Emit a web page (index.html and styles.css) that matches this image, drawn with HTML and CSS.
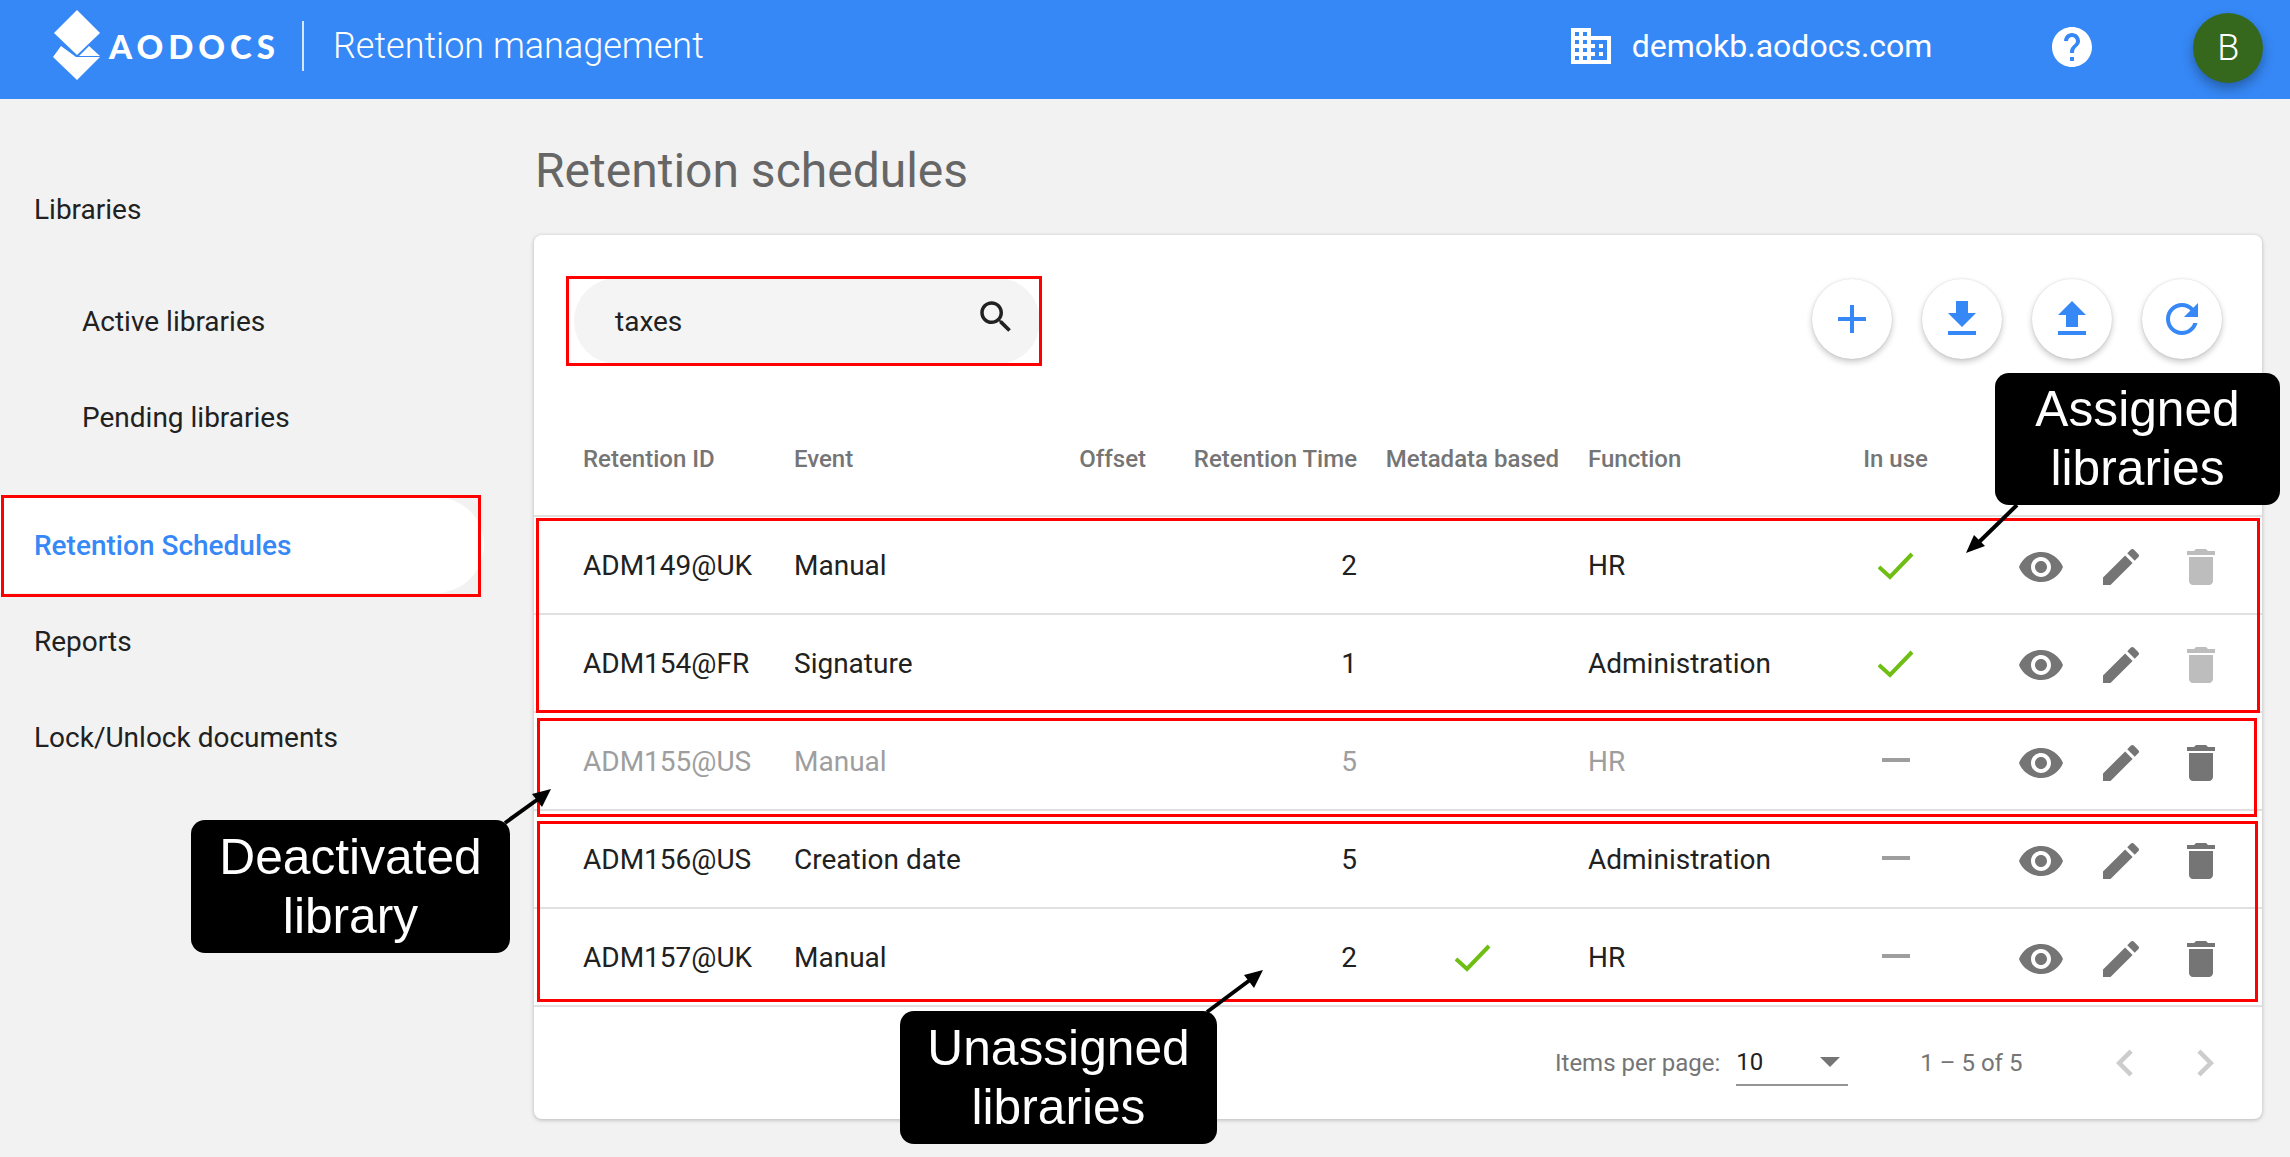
FILE: index.html
```html
<!DOCTYPE html>
<html lang="en">
<head>
<meta charset="utf-8">
<title>Retention management</title>
<link rel="stylesheet" href="styles.css">
</head>
<body>
<div class="page">
  <header class="topbar">
    <div class="brand">
      <svg class="logo-mark" viewBox="0 0 48 71" aria-hidden="true"><path d="M24 0 47 23 24 45 1 23Z"/><path d="M0 47 8 36 23 47ZM26 46 36 36 47 46ZM0 47H47L24 70Z"/></svg>
      <span class="wordmark">AODOCS</span>
      <span class="brand-divider"></span>
      <span class="app-title">Retention management</span>
    </div>
    <div class="tenant">
      <svg class="icon-48" viewBox="0 0 24 24" aria-hidden="true"><path d="M12 7V3H2v18h20V7H12zM6 19H4v-2h2v2zm0-4H4v-2h2v2zm0-4H4V9h2v2zm0-4H4V5h2v2zm4 12H8v-2h2v2zm0-4H8v-2h2v2zm0-4H8V9h2v2zm0-4H8V5h2v2zm10 12h-8v-2h2v-2h-2v-2h2v-2h-2V9h8v10zm-2-8h-2v2h2v-2zm0 4h-2v2h2v-2z"/></svg>
      <span class="tenant-name">demokb.aodocs.com</span>
    </div>
    <svg class="icon-48 help" viewBox="0 0 24 24" aria-hidden="true"><path d="M12 2C6.48 2 2 6.48 2 12s4.48 10 10 10 10-4.48 10-10S17.52 2 12 2zm1 17h-2v-2h2v2zm2.07-7.75l-.9.92C13.45 12.9 13 13.5 13 15h-2v-.5c0-1.1.45-2.1 1.17-2.83l1.24-1.26c.37-.36.59-.86.59-1.41 0-1.1-.9-2-2-2s-2 .9-2 2H8c0-2.21 1.79-4 4-4s4 1.79 4 4c0 .88-.36 1.68-.93 2.25z"/></svg>
    <div class="avatar">B</div>
  </header>

  <div class="content">
    <nav class="sidebar">
      <a class="nav-item">Libraries</a>
      <a class="nav-item nav-sub nav-sub-first">Active libraries</a>
      <a class="nav-item nav-sub">Pending libraries</a>
      <a class="nav-item nav-active">Retention Schedules</a>
      <a class="nav-item">Reports</a>
      <a class="nav-item">Lock/Unlock documents</a>
    </nav>

    <main class="main">
      <h1 class="page-title">Retention schedules</h1>
      <section class="card">
        <div class="toolbar">
          <div class="search">
            <span class="search-text">taxes</span>
            <svg class="search-icon" viewBox="0 0 24 24" aria-hidden="true"><path d="M15.5 14h-.79l-.28-.27C15.41 12.59 16 11.11 16 9.5 16 5.91 13.09 3 9.5 3S3 5.91 3 9.5 5.91 16 9.5 16c1.61 0 3.09-.59 4.23-1.57l.27.28v.79l5 4.99L20.49 19l-4.99-5zm-6 0C7.01 14 5 11.99 5 9.5S7.01 5 9.5 5 14 7.01 14 9.5 11.99 14 9.5 14z"/></svg>
          </div>
          <div class="fabs">
            <button class="fab"><svg class="icon-48" viewBox="0 0 24 24"><path d="M19 13h-6v6h-2v-6H5v-2h6V5h2v6h6v2z"/></svg></button>
            <button class="fab"><svg class="icon-48" viewBox="0 0 24 24"><path d="M19 9h-4V3H9v6H5l7 7 7-7zM5 18v2h14v-2H5z"/></svg></button>
            <button class="fab"><svg class="icon-48" viewBox="0 0 24 24"><path d="M9 16h6v-6h4l-7-7-7 7h4zm-4 2h14v2H5z"/></svg></button>
            <button class="fab"><svg class="icon-48" viewBox="0 0 24 24"><path d="M17.65 6.35C16.2 4.9 14.21 4 12 4c-4.42 0-7.99 3.58-7.99 8s3.57 8 7.99 8c3.73 0 6.84-2.55 7.73-6h-2.08c-.82 2.33-3.04 4-5.65 4-3.31 0-6-2.69-6-6s2.69-6 6-6c1.66 0 3.14.69 4.22 1.78L13 11h7V4l-2.35 2.35z"/></svg></button>
          </div>
        </div>

        <div class="row row-head">
          <span>Retention ID</span><span>Event</span><span class="right">Offset</span><span class="right">Retention Time</span><span class="center">Metadata based</span><span>Function</span><span class="center">In use</span><span></span>
        </div>

        <div class="row">
          <span>ADM149@UK</span><span>Manual</span><span></span><span class="right">2</span><span></span><span>HR</span>
          <span class="center"><svg class="check" viewBox="0 0 36 28"><path d="M1 15 12 25 34 2"/></svg></span>
          <span class="actions">
            <svg class="icon-48" viewBox="0 0 24 24"><path d="M12 4.5C7 4.5 2.73 7.61 1 12c1.73 4.39 6 7.5 11 7.5s9.27-3.11 11-7.5c-1.73-4.39-6-7.5-11-7.5zM12 17c-2.76 0-5-2.24-5-5s2.24-5 5-5 5 2.24 5 5-2.24 5-5 5zm0-8c-1.66 0-3 1.34-3 3s1.34 3 3 3 3-1.34 3-3-1.34-3-3-3z"/></svg>
            <svg class="icon-48" viewBox="0 0 24 24"><path d="M3 17.25V21h3.75L17.81 9.94l-3.75-3.75L3 17.25zM20.71 7.04c.39-.39.39-1.02 0-1.41l-2.34-2.34c-.39-.39-1.02-.39-1.41 0l-1.83 1.83 3.75 3.75 1.83-1.83z"/></svg>
            <svg class="icon-48 muted" viewBox="0 0 24 24"><path d="M6 19c0 1.1.9 2 2 2h8c1.1 0 2-.9 2-2V7H6v12zM19 4h-3.5l-1-1h-5l-1 1H5v2h14V4z"/></svg>
          </span>
        </div>

        <div class="row">
          <span>ADM154@FR</span><span>Signature</span><span></span><span class="right">1</span><span></span><span>Administration</span>
          <span class="center"><svg class="check" viewBox="0 0 36 28"><path d="M1 15 12 25 34 2"/></svg></span>
          <span class="actions">
            <svg class="icon-48" viewBox="0 0 24 24"><path d="M12 4.5C7 4.5 2.73 7.61 1 12c1.73 4.39 6 7.5 11 7.5s9.27-3.11 11-7.5c-1.73-4.39-6-7.5-11-7.5zM12 17c-2.76 0-5-2.24-5-5s2.24-5 5-5 5 2.24 5 5-2.24 5-5 5zm0-8c-1.66 0-3 1.34-3 3s1.34 3 3 3 3-1.34 3-3-1.34-3-3-3z"/></svg>
            <svg class="icon-48" viewBox="0 0 24 24"><path d="M3 17.25V21h3.75L17.81 9.94l-3.75-3.75L3 17.25zM20.71 7.04c.39-.39.39-1.02 0-1.41l-2.34-2.34c-.39-.39-1.02-.39-1.41 0l-1.83 1.83 3.75 3.75 1.83-1.83z"/></svg>
            <svg class="icon-48 muted" viewBox="0 0 24 24"><path d="M6 19c0 1.1.9 2 2 2h8c1.1 0 2-.9 2-2V7H6v12zM19 4h-3.5l-1-1h-5l-1 1H5v2h14V4z"/></svg>
          </span>
        </div>

        <div class="row row-off">
          <span>ADM155@US</span><span>Manual</span><span></span><span class="right">5</span><span></span><span>HR</span>
          <span class="center"><span class="dash"></span></span>
          <span class="actions">
            <svg class="icon-48" viewBox="0 0 24 24"><path d="M12 4.5C7 4.5 2.73 7.61 1 12c1.73 4.39 6 7.5 11 7.5s9.27-3.11 11-7.5c-1.73-4.39-6-7.5-11-7.5zM12 17c-2.76 0-5-2.24-5-5s2.24-5 5-5 5 2.24 5 5-2.24 5-5 5zm0-8c-1.66 0-3 1.34-3 3s1.34 3 3 3 3-1.34 3-3-1.34-3-3-3z"/></svg>
            <svg class="icon-48" viewBox="0 0 24 24"><path d="M3 17.25V21h3.75L17.81 9.94l-3.75-3.75L3 17.25zM20.71 7.04c.39-.39.39-1.02 0-1.41l-2.34-2.34c-.39-.39-1.02-.39-1.41 0l-1.83 1.83 3.75 3.75 1.83-1.83z"/></svg>
            <svg class="icon-48" viewBox="0 0 24 24"><path d="M6 19c0 1.1.9 2 2 2h8c1.1 0 2-.9 2-2V7H6v12zM19 4h-3.5l-1-1h-5l-1 1H5v2h14V4z"/></svg>
          </span>
        </div>

        <div class="row">
          <span>ADM156@US</span><span>Creation date</span><span></span><span class="right">5</span><span></span><span>Administration</span>
          <span class="center"><span class="dash"></span></span>
          <span class="actions">
            <svg class="icon-48" viewBox="0 0 24 24"><path d="M12 4.5C7 4.5 2.73 7.61 1 12c1.73 4.39 6 7.5 11 7.5s9.27-3.11 11-7.5c-1.73-4.39-6-7.5-11-7.5zM12 17c-2.76 0-5-2.24-5-5s2.24-5 5-5 5 2.24 5 5-2.24 5-5 5zm0-8c-1.66 0-3 1.34-3 3s1.34 3 3 3 3-1.34 3-3-1.34-3-3-3z"/></svg>
            <svg class="icon-48" viewBox="0 0 24 24"><path d="M3 17.25V21h3.75L17.81 9.94l-3.75-3.75L3 17.25zM20.71 7.04c.39-.39.39-1.02 0-1.41l-2.34-2.34c-.39-.39-1.02-.39-1.41 0l-1.83 1.83 3.75 3.75 1.83-1.83z"/></svg>
            <svg class="icon-48" viewBox="0 0 24 24"><path d="M6 19c0 1.1.9 2 2 2h8c1.1 0 2-.9 2-2V7H6v12zM19 4h-3.5l-1-1h-5l-1 1H5v2h14V4z"/></svg>
          </span>
        </div>

        <div class="row">
          <span>ADM157@UK</span><span>Manual</span><span></span><span class="right">2</span>
          <span class="center"><svg class="check" viewBox="0 0 36 28"><path d="M1 15 12 25 34 2"/></svg></span>
          <span>HR</span>
          <span class="center"><span class="dash"></span></span>
          <span class="actions">
            <svg class="icon-48" viewBox="0 0 24 24"><path d="M12 4.5C7 4.5 2.73 7.61 1 12c1.73 4.39 6 7.5 11 7.5s9.27-3.11 11-7.5c-1.73-4.39-6-7.5-11-7.5zM12 17c-2.76 0-5-2.24-5-5s2.24-5 5-5 5 2.24 5 5-2.24 5-5 5zm0-8c-1.66 0-3 1.34-3 3s1.34 3 3 3 3-1.34 3-3-1.34-3-3-3z"/></svg>
            <svg class="icon-48" viewBox="0 0 24 24"><path d="M3 17.25V21h3.75L17.81 9.94l-3.75-3.75L3 17.25zM20.71 7.04c.39-.39.39-1.02 0-1.41l-2.34-2.34c-.39-.39-1.02-.39-1.41 0l-1.83 1.83 3.75 3.75 1.83-1.83z"/></svg>
            <svg class="icon-48" viewBox="0 0 24 24"><path d="M6 19c0 1.1.9 2 2 2h8c1.1 0 2-.9 2-2V7H6v12zM19 4h-3.5l-1-1h-5l-1 1H5v2h14V4z"/></svg>
          </span>
        </div>

        <footer class="paginator">
          <span class="per-page-label">Items per page:</span>
          <div class="per-page"><span>10</span><span class="caret"></span></div>
          <span class="range">1 – 5 of 5</span>
          <svg class="chev" viewBox="0 0 24 24"><path d="M15.41 7.41 14 6l-6 6 6 6 1.41-1.41L10.83 12z"/></svg>
          <svg class="chev" viewBox="0 0 24 24"><path d="M10 6 8.59 7.41 13.17 12l-4.58 4.59L10 18l6-6z"/></svg>
        </footer>
      </section>
    </main>
  </div>

  <div class="mark mark-nav"></div>
  <div class="mark mark-search"></div>
  <div class="mark mark-assigned"></div>
  <div class="mark mark-off"></div>
  <div class="mark mark-unassigned"></div>

  <svg class="arrows" viewBox="0 0 2290 1157" aria-hidden="true">
    <path class="arrow-line" d="M2017 505 1976 545"/><path d="M1966 553 1985 546 1974 535Z"/>
    <path class="arrow-line" d="M505 823 541 797"/><path d="M551 789 532 794 542 807Z"/>
    <path class="arrow-line" d="M1207 1012 1254 977"/><path d="M1263 970 1244 975 1254 988Z"/>
  </svg>

  <div class="callout callout-assigned">Assigned<br>libraries</div>
  <div class="callout callout-off">Deactivated<br>library</div>
  <div class="callout callout-unassigned">Unassigned<br>libraries</div>
</div>
</body>
</html>
```

FILE: styles.css
```css
* { box-sizing: border-box; }
html, body { margin: 0; padding: 0; }
body { font-family: Roboto, "Noto Sans", sans-serif; color: #212121; background: #f2f2f2; }
.page { position: relative; width: 2290px; height: 1157px; overflow: hidden; background: #f2f2f2; }

.topbar { display: flex; align-items: center; height: 99px; background: #3688f6; color: #fff; fill: #fff; padding: 0 0 7px 53px; }
.brand { display: flex; align-items: center; }
.logo-mark { width: 48px; height: 71px; fill: #fff; margin-bottom: 2px; }
.wordmark { margin-left: 8px; font-family: Lato, sans-serif; font-weight: 900; font-size: 33px; letter-spacing: 5px; }
.brand-divider { width: 2px; height: 50px; margin-left: 22px; background: rgba(255,255,255,.8); }
.app-title { margin-left: 29px; font-size: 36px; font-weight: 300; }
.tenant { display: flex; align-items: center; margin-left: 863px; }
.tenant-name { margin-left: 17px; font-size: 32px; }
.icon-48 { width: 48px; height: 48px; display: block; }
.help { margin-left: 116px; margin-top: 2px; }
.avatar { display: flex; align-items: center; justify-content: center; width: 70px; height: 70px; margin-left: 97px; margin-top: 4px; border-radius: 50%; background: #35681d; font-size: 36px; font-weight: 300; box-shadow: 0 6px 12px rgba(0,0,0,.3); }

.content { display: flex; }
.sidebar { width: 534px; flex: none; padding-top: 62px; display: flex; flex-direction: column; }
.nav-item { display: flex; align-items: center; height: 96px; padding-left: 34px; width: 484px; font-size: 28px; }
.nav-sub { padding-left: 82px; }
.nav-sub-first { margin-top: 16px; }
.nav-active { margin-top: 32px; padding-left: 34px; background: #fff; border-radius: 0 48px 48px 0; color: #3688f6; font-weight: 500; }

.main { flex: 1; }
.page-title { margin: 46px 0 0 1px; height: 90px; font-size: 48px; line-height: 52px; font-weight: 400; color: #666; }
.card { width: 1728px; height: 884px; background: #fff; border-radius: 8px; box-shadow: 0 1px 4px rgba(0,0,0,.25); }

.toolbar { display: flex; justify-content: space-between; height: 166px; padding: 43px 40px 0 40px; }
.search { display: flex; align-items: center; justify-content: space-between; width: 466px; height: 86px; padding: 0 23px 0 41px; border-radius: 43px; background: #f4f4f4; }
.search-text { font-size: 28px; }
.search-icon { width: 42px; height: 42px; fill: #212121; margin-bottom: 8px; }
.fabs { display: flex; gap: 30px; margin-top: 1px; }
.fab { display: flex; align-items: center; justify-content: center; width: 80px; height: 80px; padding: 0; border: 0; border-radius: 50%; background: #fff; fill: #3688f6; box-shadow: 0 3px 6px rgba(0,0,0,.22), 0 0 2px rgba(0,0,0,.12); }

.row { display: grid; grid-template-columns: 211px 212px 140px 211px 231px 275px 65px 1fr; align-items: center; height: 98px; padding-left: 49px; border-bottom: 2px solid #e0e0e0; font-size: 28px; }
.row-head { height: 116px; padding-top: 2px; font-size: 24px; font-weight: 500; color: #757575; white-space: nowrap; }
.row-off { color: #9e9e9e; }
.right { text-align: right; }
.center { display: flex; justify-content: center; }
.check { width: 36px; height: 28px; fill: none; stroke: #6ebe13; stroke-width: 4; margin-top: 1px; }
.dash { width: 28px; height: 4px; background: #9e9e9e; margin-top: -2px; }
.actions { display: flex; gap: 32px; padding-left: 89px; fill: #757575; margin-top: 3px; }
.muted { fill: #bdbdbd; }

.paginator { display: flex; align-items: center; height: 112px; padding-left: 1021px; font-size: 24px; color: #757575; }
.per-page { display: flex; align-items: center; justify-content: space-between; width: 112px; height: 46px; margin-left: 16px; padding-right: 8px; border-bottom: 2px solid #949494; color: #212121; }
.caret { width: 0; height: 0; border-left: 10px solid transparent; border-right: 10px solid transparent; border-top: 10px solid #757575; }
.range { margin-left: 72px; }
.chev { width: 54px; height: 54px; fill: #ccc; }
.range + .chev { margin-left: 76px; }
.chev + .chev { margin-left: 26px; }

.mark { position: absolute; border: 3px solid #f00; }
.mark-nav { left: 1px; top: 495px; width: 480px; height: 102px; }
.mark-search { left: 566px; top: 276px; width: 476px; height: 90px; }
.mark-assigned { left: 536px; top: 518px; width: 1724px; height: 195px; }
.mark-off { left: 537px; top: 718px; width: 1720px; height: 99px; }
.mark-unassigned { left: 537px; top: 821px; width: 1721px; height: 181px; }

.arrows { position: absolute; left: 0; top: 0; width: 2290px; height: 1157px; fill: #000; }
.arrow-line { fill: none; stroke: #000; stroke-width: 4; }

.callout { position: absolute; display: flex; align-items: center; justify-content: center; text-align: center; border-radius: 14px; background: #000; color: #fff; font-family: "Liberation Sans", Arial, sans-serif; font-size: 49.7px; line-height: 59px; }
.callout-assigned { left: 1995px; top: 373px; width: 285px; height: 132px; }
.callout-off { left: 191px; top: 820px; width: 319px; height: 133px; }
.callout-unassigned { left: 900px; top: 1011px; width: 317px; height: 133px; }
```
